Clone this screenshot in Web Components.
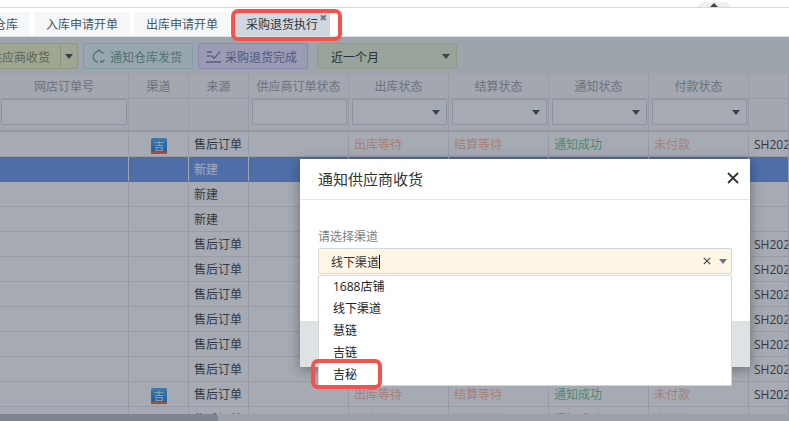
<!DOCTYPE html>
<html lang="zh">
<head>
<meta charset="utf-8">
<title>采购退货执行</title>
<style>
html,body{margin:0;padding:0;height:421px;overflow:hidden;background:#fff;font-family:"Open Sans","Noto Sans CJK SC",sans-serif;font-size:12px;color:#333}
x-app{height:421px}
</style>
</head>
<body>
<x-app></x-app>
<script>
function def(name,html,setup){
  customElements.define(name,class extends HTMLElement{
    constructor(){super();const r=this.attachShadow({mode:'open'});r.innerHTML=html;if(setup)setup(r,this);}
  });
}
def('x-tabs',`<style>
:host{display:block;height:37px;box-sizing:border-box;position:relative;overflow:hidden;background:#fff;border-bottom:1px solid #dde2e2}
.line{height:7px;border-bottom:1px solid #d5dbdb;box-sizing:content-box}
.peek{position:absolute;left:697px;top:2px;width:34px;height:5px;background:#eef0f0;clip-path:polygon(4px 0,30px 0,34px 5px,0 5px)}
.peek i{position:absolute;left:13px;top:1px;border:4px solid transparent;border-top:0;border-bottom:4px solid #444}
.row{display:flex;gap:4px;margin:4px 0 0 -12px}
.t{position:relative;height:24px;padding:0 12px;background:#f5f7f8;line-height:25px;font-size:12px;color:#4a5560;white-space:nowrap}
.t:first-child{padding-left:0;width:42px;box-sizing:border-box;text-align:right;padding-right:12px}
.t.on{background:#cfd8e2;color:#333}
.x{position:absolute;right:3px;top:0;font:9px/12px "DejaVu Sans",sans-serif;color:#6c7785}
</style>
<div class="line"></div><div class="peek"><i></i></div>
<div class="row">
<div class="t">仓库</div><div class="t">入库申请开单</div><div class="t">出库申请开单</div>
<div class="t on">采购退货执行<span class="x">✖</span></div>
</div>`);

def('x-toolbar',`<style>
:host{display:flex;align-items:flex-start;height:37px;box-sizing:border-box;padding-top:6px;background:#f2f5f3;font-size:12px;overflow:hidden}
.b{display:flex;align-items:center;justify-content:center;gap:4px;height:26px;box-sizing:border-box;border:1px solid;border-radius:2px;white-space:nowrap;flex:none}
.b span{padding-top:1px}
.a{margin-left:-50px;width:128px;background:#f3f8c8;border-color:#d7e2a5;color:#858c6a;padding:0;justify-content:flex-start;gap:0}
.a span{flex:none;width:109px;box-sizing:border-box;text-align:right;padding-right:10px}
.a i{display:flex;align-items:center;justify-content:center;width:17px;height:100%;border-left:1px solid #d0db9d}
.tri{display:block;width:0;height:0;border:4px solid transparent;border-bottom:0;border-top:5px solid #3f4a58}
.c{margin-left:5px;width:110px;background:#e6fbfb;border-color:#bbeee9;color:#6f9f98;padding-right:2px}
.d{margin-left:5px;width:110px;background:#e9e8ff;border-color:#cbc5ff;color:#7a74b0;padding-right:3px}
.e{margin-left:9px;width:140px;background:#e8f6d8;border-color:#d8e8c6;color:#333;justify-content:space-between;padding:0 6px 0 13px}
svg{display:block;flex:none}
</style>
<div class="b a"><span>通知供应商收货</span><i><b class="tri"></b></i></div>
<div class="b c"><svg width="14" height="14" viewBox="0 0 14 14" fill="none" stroke="#6f9f98" stroke-width="1.3"><path d="M11.5 4.6 7 1 2.6 4.6C1.2 6 1 8 1.6 9.8 2.3 11.6 4 12.8 6 13M9.5 13c1.3-.3 2.4-1.2 3-2.4"/><path d="M9.8 12.9l-1.6-1.2M9.8 12.9l-1.3 1"/></svg><span>通知仓库发货</span></div>
<div class="b d"><svg width="15" height="13" viewBox="0 0 15 13" fill="none" stroke="#7a74b0" stroke-width="1.3"><path d="M1 2h5M1 6h3M0 12h15M5 5.6 8 8.4 14 1.6"/></svg><span>采购退货完成</span></div>
<div class="b e"><span>近一个月</span><b class="tri" style="border-top-color:#48525e"></b></div>`);

def('x-app-icon',`<style>:host{display:block;width:16px;height:16px}svg{display:block}text{font-family:"Noto Sans CJK SC",sans-serif}</style>
<svg width="16" height="16" viewBox="0 0 16 16"><defs><linearGradient id="g" x1="0" y1="0" x2="0" y2="1"><stop offset="0" stop-color="#4db0ff"/><stop offset="1" stop-color="#1f78d8"/></linearGradient></defs>
<rect width="16" height="16" rx="1.5" fill="url(#g)"/><path d="M0 13.500h16v1A1.500 1.500 0 0 1 14.500 16H1.500A1.500 1.500 0 0 1 0 14.500Z" fill="#ee6a30"/>
<text x="8" y="11.500" text-anchor="middle" font-size="10.500" fill="#eef3f8">吉</text></svg>`);

const HEAD=['网店订单号','渠道','来源','供应商订单状态','出库状态','结算状态','通知状态','付款状态',''];
const FILTER=['i','','','i','s','s','s','s',''];
const ST=['出库等待','结算等待','通知成功','未付款'];
const ROWS=[
 {ic:1,src:'售后订单',st:1,sh:1},{src:'新建',sel:1},{src:'新建'},{src:'新建'},
 {src:'售后订单',sh:1},{src:'售后订单',sh:1},{src:'售后订单',sh:1},{src:'售后订单',sh:1},{src:'售后订单',sh:1},{src:'售后订单',sh:1},
 {ic:1,src:'售后订单',st:1,sh:1},{src:'售后订单',st:1}
];
def('x-grid',`<style>
:host{display:block;background:#fff;font-size:12px;overflow:hidden;position:relative;flex:1;min-height:0}
.r{display:grid;grid-template-columns:129px 60px 60px 100px 100px 100px 100px 100px 1fr;box-sizing:border-box}
.r>div{box-sizing:border-box;border-right:1px solid #e4e7eb;border-bottom:1px solid #e4e7eb;white-space:nowrap;overflow:hidden}
.h{height:25px;background:#fafafa;color:#a0a3a8}
.h>div{text-align:center;line-height:26px}
.f{height:33px;background:#fafafa}
.f>div{border-bottom:2px solid #dfe2e6;padding:0 1px 0 3px}
.f>div:first-child{padding-left:1px}
.in{height:26px;box-sizing:border-box;border:1px solid #d5d9de;border-radius:2px;background:#fff;position:relative}
.in.s::after{content:"";position:absolute;right:6px;top:10px;border:4px solid transparent;border-bottom:0;border-top:5px solid #4a5360}
.d{height:25px;color:#444}
.d>div{line-height:26px;padding:0 5px;background:#fff}
.d.sel>div{background:#6f9bee;color:#fff;border-bottom-color:#6f9bee;border-right-color:#f2f4f7}
.ic{display:flex;justify-content:center;align-items:flex-start;padding-top:6px!important}
.o{color:#ffb9a0}.g{color:#62cf97}
.chev{position:absolute;left:596px;top:53px}
</style><div id="w"></div>
<svg class="chev" width="9" height="5" viewBox="0 0 9 5" fill="none" stroke="#dfe2e6"><path d="M.5 4.500 4.500 .8 8.500 4.500"/></svg>`,(r)=>{
  let h='<div class="r h">'+HEAD.map(t=>`<div>${t}</div>`).join('')+'</div>';
  h+='<div class="r f">'+FILTER.map(k=>`<div>${k?`<div class="in ${k=='s'?'s':''}"></div>`:''}</div>`).join('')+'</div>';
  for(const o of ROWS){
    h+=`<div class="r d ${o.sel?'sel':''}"><div></div>`;
    h+=o.ic?'<div class="ic"><x-app-icon></x-app-icon></div>':'<div></div>';
    h+=`<div>${o.src}</div><div></div>`;
    if(o.st)h+=`<div class="o">${ST[0]}</div><div class="o">${ST[1]}</div><div class="g">${ST[2]}</div><div class="o">${ST[3]}</div>`;
    else h+='<div></div><div></div><div></div><div></div>';
    h+=`<div>${o.sh?'SH202':''}</div></div>`;
  }
  r.getElementById('w').innerHTML=h;
});

def('x-scrollbar',`<style>
:host{display:block;position:absolute;left:0;right:0;bottom:0;height:7px;background:#eee}
i{display:block;width:218px;height:7px;background:#c0c3c9;border-radius:0 3px 0 0}
</style><i></i>`);

def('x-modal',`<style>
:host{display:flex;flex-direction:column;position:absolute;left:300px;top:159px;width:450px;height:208px;background:#fff;box-shadow:0 3px 12px rgba(0,0,0,.35);font-size:12px;color:#333}
.hd{height:41px;box-sizing:border-box;border-bottom:1px solid #e5e5e5;padding:0 11px 2px 18px;display:flex;align-items:center;justify-content:space-between;font-size:15px;color:#333}
.hd svg{display:block}
.bd{flex:1;padding:28px 18px 0;position:relative}
.lb{line-height:18px;height:16px;color:#7a7f85;margin-bottom:4px}
.sel{height:26px;box-sizing:border-box;border:1px solid #cfd8dc;border-radius:2px;background:#fff6e6;display:flex;align-items:center;padding:2px 4px 0 12px;color:#333}
.cur{width:1px;height:14px;background:#111;margin-top:-1px}
.sp{flex:1}
.sel svg{margin-top:-2px}
.tri{width:0;height:0;border:4.500px solid transparent;border-bottom:0;border-top:5px solid #6b747e;margin:-2px 0 0 8px}
.ft{height:46px;background:#dfe2e3}
.dd{position:absolute;left:18px;right:18px;top:75px;height:111px;box-sizing:border-box;background:#fff;border:1px solid #cfd8dc;border-radius:2px;overflow:hidden;z-index:2;color:#222}
.dd div{height:22px;line-height:24px;padding-left:14px}
.dd div:first-child{margin-top:-1px}
</style>
<div class="hd"><span>通知供应商收货</span><svg width="12" height="12" viewBox="0 0 12 12" stroke="#333" stroke-width="1.800" fill="none"><path d="M1 1l10 10M11 1 1 11"/></svg></div>
<div class="bd"><div class="lb">请选择渠道</div>
<div class="sel"><span>线下渠道</span><span class="cur"></span><span class="sp"></span>
<svg width="8" height="8" viewBox="0 0 8 8" stroke="#444" stroke-width="1.200" fill="none"><path d="M.8.8l6.400 6.400M7.200.8.8 7.200"/></svg><span class="tri"></span></div>
<div class="dd"><div>1688店铺</div><div>线下渠道</div><div>慧链</div><div>吉链</div><div>吉秘</div></div>
</div><div class="ft"></div>`);

def('x-mark',`<style>:host{display:block;position:absolute;box-sizing:border-box;border:4px solid #f4524a;border-radius:7px;z-index:5}</style>`);

def('x-app',`<style>
:host{display:flex;flex-direction:column;position:relative;width:789px;height:421px;overflow:hidden}
.main{flex:1;min-height:0;display:flex;flex-direction:column;position:relative}
.ov{position:absolute;inset:37px 0 0 0;background:rgba(33,42,62,.4)}
</style>
<x-tabs></x-tabs>
<div class="main"><x-toolbar></x-toolbar><x-grid></x-grid><x-scrollbar></x-scrollbar></div>
<div class="ov"></div>
<x-modal></x-modal>
<x-mark style="left:231px;top:9px;width:111px;height:32px"></x-mark>
<x-mark style="left:311px;top:359px;width:71px;height:30px"></x-mark>`);
</script>
</body>
</html>
